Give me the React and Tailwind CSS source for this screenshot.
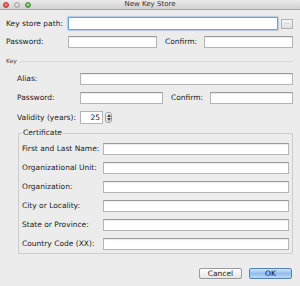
import React from "react";

function Input({ className = "" }) {
  return (
    <div className={"h-[12px] bg-white border border-[#b5b5b5] border-t-[#9a9a9a] shadow-[inset_0_1px_1px_rgba(0,0,0,0.08)] " + className} />
  );
}

function Label({ children, className = "" }) {
  return <span className={"text-[7.5px] leading-none text-[#222] " + className}>{children}</span>;
}

export default function App() {
  const certRows = [
    "First and Last Name:",
    "Organizational Unit:",
    "Organization:",
    "City or Locality:",
    "State or Province:",
    "Country Code (XX):",
  ];
  return (
    <div className="w-[300px] h-[286px] bg-[#ececec] flex flex-col overflow-hidden" style={{ fontFamily: '"DejaVu Sans", "Liberation Sans", sans-serif' }}>
      {/* title bar */}
      <div className="h-[10px] bg-gradient-to-b from-[#ebebeb] to-[#d2d2d2] border-b border-[#a5a5a5] flex items-center relative shrink-0">
        <div className="flex items-center gap-[5px] pl-[3px]">
          <span className="w-[6px] h-[6px] rounded-full bg-[radial-gradient(circle_at_50%_35%,#f8908a,#d8423a)] border border-[#b8342d]" />
          <span className="w-[6px] h-[6px] rounded-full bg-[radial-gradient(circle_at_50%_35%,#e6e6e6,#bdbdbd)] border border-[#a4a4a4]" />
          <span className="w-[6px] h-[6px] rounded-full bg-[radial-gradient(circle_at_50%_35%,#a6e08c,#4ea53c)] border border-[#3f8a31]" />
        </div>
        <div className="absolute inset-0 flex items-center justify-center text-[7px] leading-none text-[#333]">New Key Store</div>
      </div>

      {/* row 1 */}
      <div className="flex items-center mt-[7px] h-[13px]">
        <Label className="ml-[6px] w-[62px]">Key store path:</Label>
        <div className="w-[210px] h-[13px] bg-white border-[1.5px] border-[#6aa0d8] rounded-[1px] shadow-[0_0_1px_1px_rgba(120,170,230,0.5)]" />
        <div className="ml-[3px] w-[12px] h-[10px] bg-gradient-to-b from-[#f6f6f6] to-[#e0e0e0] border border-[#b0b0b0] flex items-center justify-center text-[5px] leading-none text-[#888]">···</div>
      </div>
      {/* row 2 */}
      <div className="flex items-center mt-[6px] h-[12px]">
        <Label className="ml-[6px] w-[62px]">Password:</Label>
        <Input className="w-[89px]" />
        <Label className="ml-[8px] w-[39px]">Confirm:</Label>
        <Input className="w-[89px]" />
      </div>

      {/* Key separator */}
      <div className="flex items-center mt-[9px] h-[8px]">
        <span className="ml-[6px] text-[6px] leading-none text-[#444]">Key</span>
        <div className="ml-[3px] w-[273px] h-px bg-[#d8d8d8]" />
      </div>

      <div className="flex items-center mt-[8px] h-[12px]">
        <Label className="ml-[17px] w-[63px]">Alias:</Label>
        <Input className="w-[213px]" />
      </div>
      <div className="flex items-center mt-[7px] h-[12px]">
        <Label className="ml-[17px] w-[63px]">Password:</Label>
        <Input className="w-[83px]" />
        <Label className="ml-[8px] w-[39px]">Confirm:</Label>
        <Input className="w-[83px]" />
      </div>
      <div className="flex items-center mt-[7px] h-[13px]">
        <Label className="ml-[17px] w-[63px]">Validity (years):</Label>
        <div className="w-[23px] h-[13px] bg-white border border-[#b5b5b5] flex items-center justify-end pr-[2px] text-[7.5px] leading-none text-[#222]">25</div>
        <div className="ml-[2px] w-[7px] h-[11px] rounded-[3px] bg-gradient-to-b from-[#fbfbfb] to-[#e2e2e2] border border-[#9c9c9c] flex flex-col items-center justify-center gap-[1px]">
          <svg width="4" height="3" viewBox="0 0 4 3"><path d="M0 3 L2 0 L4 3 Z" fill="#444" /></svg>
          <svg width="4" height="3" viewBox="0 0 4 3"><path d="M0 0 L2 3 L4 0 Z" fill="#444" /></svg>
        </div>
      </div>

      {/* Certificate group */}
      <div className="relative ml-[18px] mt-[9px] w-[275px] h-[121px] border border-[#cdcdcd] rounded-[1px]">
        <span className="absolute left-[3px] top-[-5px] px-[1px] bg-[#ececec] text-[7.5px] leading-none text-[#222]">Certificate</span>
        <div className="flex flex-col gap-[7px] pt-[9px]">
          {certRows.map((r) => (
            <div key={r} className="flex items-center h-[12px]">
              <Label className="ml-[3px] w-[81px]">{r}</Label>
              <Input className="w-[186px]" />
            </div>
          ))}
        </div>
      </div>

      {/* buttons */}
      <div className="flex justify-end gap-[7px] mt-[14px] pr-[8px]">
        <div className="w-[43px] h-[11px] rounded-[2px] bg-gradient-to-b from-[#ffffff] to-[#e6e6e6] border border-[#9a9a9a] flex items-center justify-center text-[7.5px] leading-none text-[#222]">Cancel</div>
        <div className="w-[43px] h-[11px] rounded-[2px] bg-gradient-to-b from-[#cfe4fb] via-[#8fbdf0] to-[#b9dbfb] border border-[#5a7fb5] flex items-center justify-center text-[7.5px] leading-none text-[#111]">OK</div>
      </div>
    </div>
  );
}
